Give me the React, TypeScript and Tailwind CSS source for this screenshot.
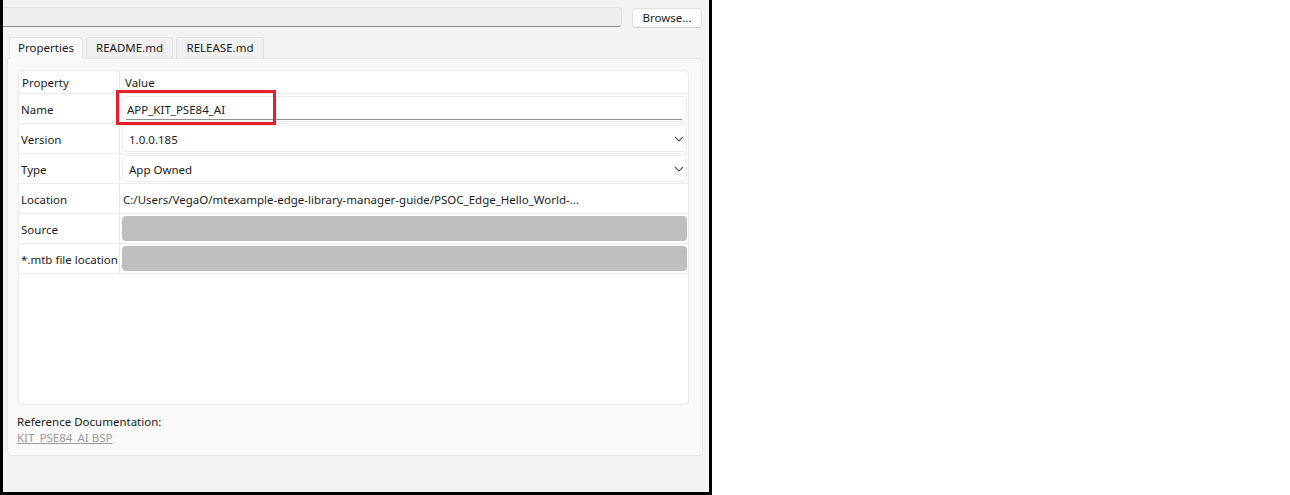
import React from "react";

const font = { fontFamily: '"Noto Sans", "Open Sans", sans-serif' };

function Chevron() {
  return (
    <svg width="10" height="6" viewBox="0 0 10 6" className="shrink-0">
      <path d="M1 1 L5 5 L9 1" fill="none" stroke="#5a5a5a" strokeWidth="1.1" />
    </svg>
  );
}

function Row({ label, children }: { label: string; children: React.ReactNode }) {
  return (
    <div className="flex h-[30px] border-b border-[#ececec]">
      <div className="w-[101px] shrink-0 border-r border-[#e6e6e6] pl-[2px] pt-[2px] flex items-center whitespace-nowrap">
        {label}
      </div>
      <div className="flex-1 flex items-center pl-[2px] pr-[1px]">{children}</div>
    </div>
  );
}

export default function App() {
  return (
    <div className="w-[1290px] h-[495px] bg-white flex" style={font}>
      <div className="w-[712px] h-[495px] border-[3px] border-t-0 border-black bg-[#f3f3f3] flex flex-col text-[11.5px] text-[#1b1b1b]">
        {/* path field + browse */}
        <div className="flex items-center h-[35px] pt-[1px]">
          <div className="flex-1 h-[20px] bg-[#efefef] border border-l-0 border-[#e2e2e2] border-b-[#8c8c8c] rounded-r-[4px] mt-[-2px]" />
          <button className="ml-[10px] mr-[7px] w-[70px] h-[20px] bg-[#fdfdfd] border border-[#e1e1e1] border-b-[#cfcfcf] rounded-[4px] text-[11.5px] leading-none flex items-center justify-center">
            Browse...
          </button>
        </div>

        {/* tabs */}
        <div className="flex items-end h-[23px] pl-[6px] gap-[3px]">
          <div className="w-[74px] h-[22px] pb-[1px] flex items-center justify-center bg-[#f9f9f9] border border-b-0 border-[#e5e5e5] rounded-t-[3px] relative top-[1px]">
            Properties
          </div>
          <div className="w-[87px] h-[21px] flex items-center justify-center bg-[#f0f0f0] border border-b-0 border-[#e2e2e2] rounded-t-[3px]">
            README.md
          </div>
          <div className="w-[88px] h-[21px] flex items-center justify-center bg-[#f0f0f0] border border-b-0 border-[#e2e2e2] rounded-t-[3px]">
            RELEASE.md
          </div>
        </div>

        {/* tab page */}
        <div className="ml-[4px] mr-[6px] h-[398px] bg-[#f9f9f9] border border-[#e7e7e7] rounded-b-[4px] rounded-tr-[4px] flex flex-col pt-[11px] pl-[10px] pr-[13px]">
          <div className="h-[335px] bg-white border border-[#ececec] rounded-[4px] relative">
            <div className="flex h-[23px] border-b border-[#ececec]">
              <div className="w-[101px] shrink-0 border-r border-[#e6e6e6] pl-[3px] flex items-end pb-[2px]">Property</div>
              <div className="flex-1 pl-[5px] flex items-end pb-[2px]">Value</div>
            </div>
            <Row label="Name">
              <div className="w-full h-[26px] border border-[#ececec] rounded-[4px] relative flex items-center pl-[4px] pt-[2px]">
                APP_KIT_PSE84_AI
                <div className="absolute left-[3px] right-[4px] bottom-[1px] h-px bg-[#8f8f8f]" />
              </div>
            </Row>
            <Row label="Version">
              <div className="w-full h-[27px] border border-[#ececec] rounded-[4px] flex items-center justify-between pl-[6px] pr-[2px]">
                <span className="pt-[2px]">1.0.0.185</span>
                <Chevron />
              </div>
            </Row>
            <Row label="Type">
              <div className="w-full h-[27px] border border-[#ececec] rounded-[4px] flex items-center justify-between pl-[6px] pr-[2px]">
                <span className="pt-[2px]">App Owned</span>
                <Chevron />
              </div>
            </Row>
            <Row label="Location">
              <span className="pl-[1px] pt-[2px] whitespace-nowrap">
                C:/Users/VegaO/mtexample-edge-library-manager-guide/PSOC_Edge_Hello_World-...
              </span>
            </Row>
            <Row label="Source">
              <div className="w-full h-[25px] bg-[#bfbfbf] rounded-[4px]" />
            </Row>
            <Row label="*.mtb file location">
              <div className="w-full h-[25px] bg-[#bfbfbf] rounded-[4px]" />
            </Row>

            {/* highlight around the name value */}
            <div className="absolute left-[97px] top-[19px] w-[160px] h-[35px] border-[3px] border-[#e3202b]" />
          </div>

          <div className="mt-[9px] -ml-[1px] leading-[16px]">Reference Documentation:</div>
          <div className="-ml-[1px] leading-[16px] text-[#9a9a9a] underline">KIT_PSE84_AI BSP</div>
        </div>
      </div>
    </div>
  );
}
